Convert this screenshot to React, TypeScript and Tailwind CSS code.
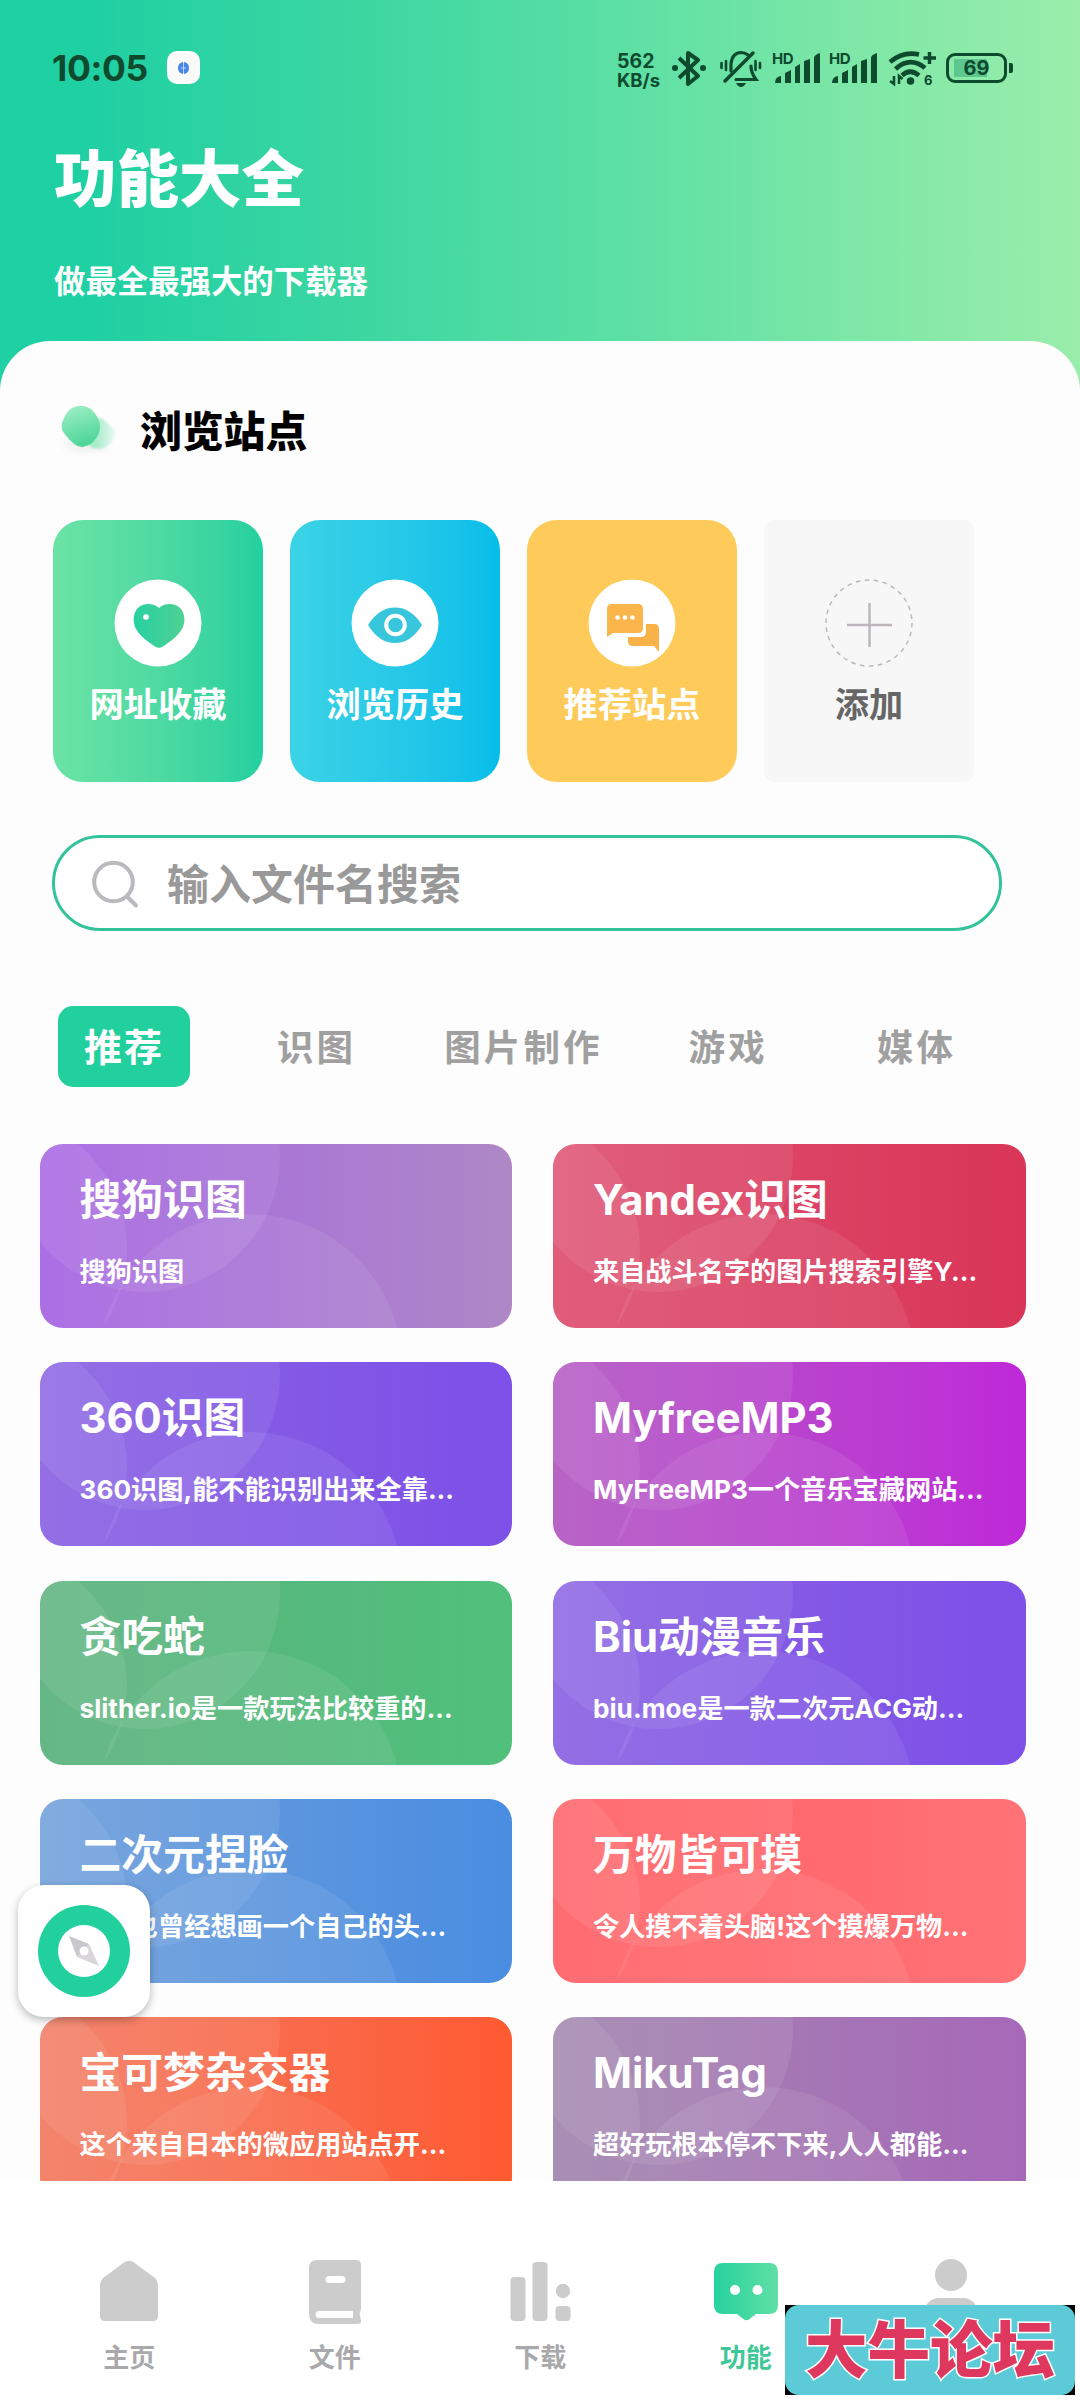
import type { ReactNode } from "react";
import { clsx } from "clsx";

interface Tool {
  title: string;
  desc: string;
  gradient: string;
}

const TOOLS: Tool[] = [
  { title: "搜狗识图", desc: "搜狗识图", gradient: "from-[#a562e3] to-[#ae88c6]" },
  { title: "Yandex识图", desc: "来自战斗名字的图片搜索引擎Y...", gradient: "from-[#de4f70] to-[#d93558]" },
  { title: "360识图", desc: "360识图,能不能识别出来全靠...", gradient: "from-[#8a62e2] to-[#7d50e8]" },
  { title: "MyfreeMP3", desc: "MyFreeMP3一个音乐宝藏网站...", gradient: "from-[#b256c2] to-[#bf28d8]" },
  { title: "贪吃蛇", desc: "slither.io是一款玩法比较重的...", gradient: "from-[#5ab17c] to-[#50c17c]" },
  { title: "Biu动漫音乐", desc: "biu.moe是一款二次元ACG动...", gradient: "from-[#8a62e2] to-[#7d50e8]" },
  { title: "二次元捏脸", desc: "你是也曾经想画一个自己的头...", gradient: "from-[#6d9edb] to-[#4a8de1]" },
  { title: "万物皆可摸", desc: "令人摸不着头脑!这个摸爆万物...", gradient: "from-[#ff6065] to-[#ff7276]" },
  { title: "宝可梦杂交器", desc: "这个来自日本的微应用站点开...", gradient: "from-[#f37a60] to-[#ff5a32]" },
  { title: "MikuTag", desc: "超好玩根本停不下来,人人都能...", gradient: "from-[#a186ae] to-[#a768b9]" },
];

const TABS = ["推荐", "识图", "图片制作", "游戏", "媒体"];

export default function App() {
  return (
    <div className="relative flex h-[2400px] w-[1080px] flex-col overflow-hidden bg-[linear-gradient(to_right,#1fd0a3_8%,#36d5a1_28%,#57dea4_54%,#82e8a7_82%,#9aedab_100%)] font-[Inter,'Noto_Sans_CJK_SC',sans-serif]">
      <header className="flex h-[341px] flex-col text-white">
        <StatusBar />
        <h1 className="mt-px pl-[54px] text-[62.5px] leading-[84px] font-black">功能大全</h1>
        <p className="mt-[41px] pl-[54px] text-[31.4px] leading-[40px] font-bold">做最全最强大的下载器</p>
      </header>

      <main className="h-[1840px] shrink-0 overflow-hidden rounded-t-[50px] bg-[#fdfdfd]">
        <div className="flex items-center pt-[58px] pl-[52px]">
          <Blob />
          <h2 className="ml-[12px] text-[41.8px] leading-[66px] font-black text-black">浏览站点</h2>
        </div>

        <div className="mt-[55px] flex gap-[27px] pl-[53px]">
          <Shortcut label="网址收藏" className="rounded-[30px] bg-linear-to-r from-[#6be3a5] to-[#22d09f] text-white">
            <HeartIcon />
          </Shortcut>
          <Shortcut label="浏览历史" className="rounded-[30px] bg-linear-to-r from-[#3bd3e6] to-[#05bee9] text-white">
            <EyeIcon />
          </Shortcut>
          <Shortcut label="推荐站点" className="rounded-[30px] bg-[#fecb5a] text-white">
            <ChatIcon />
          </Shortcut>
          <Shortcut label="添加" className="rounded-[10px] bg-[#f7f7f7] text-[#666]">
            <AddIcon />
          </Shortcut>
        </div>

        <div className="mt-[53px] ml-[52px] flex h-[96px] w-[950px] items-center rounded-full border-3 border-[#33c39a] bg-white pl-[36px]">
          <svg width="52" height="52" viewBox="0 0 52 52" fill="none" stroke="#b9b9be" strokeWidth="4" strokeLinecap="round">
            <circle cx="22.500" cy="25" r="19.300" />
            <path d="M36 39.500L45 48.500" />
          </svg>
          <span className="mt-[3px] ml-[24px] text-[42px] leading-[60px] font-bold text-[#999]">输入文件名搜索</span>
        </div>

        <div className="mt-[75px] flex h-[81px] items-center text-[36.5px] leading-[54px] font-bold tracking-[3.1px] text-[#a0a0a0]">
          {TABS.map((tab, i) => (
            <div
              key={tab}
              className={clsx(
                "flex items-center justify-center",
                i === 0 && "ml-[58px] h-[81px] w-[132px] rounded-[15px] bg-[#22d09e] text-[38px] tracking-[2px] text-white",
                i === 1 && "mt-[3px] ml-[87px]",
                i === 2 && "mt-[3px] ml-[88px]",
                i === 3 && "mt-[3px] ml-[86px]",
                i === 4 && "mt-[3px] ml-[109px]",
              )}
            >
              {tab}
            </div>
          ))}
        </div>

        <div className="mt-[57px] grid grid-cols-[472.5px_472.5px] gap-x-[41px] gap-y-[34.3px] pl-[39.5px]">
          {TOOLS.map((tool) => (
            <ToolCard key={tool.title} {...tool} />
          ))}
        </div>
      </main>

      <nav className="flex h-[219px] shrink-0 bg-white pl-[26.500px]">
        <NavItem label="主页">
          <path d="M27 2.500Q32 -1 37 2.500L58 18Q61 21 61 25V56Q61 61 56 61H8Q3 61 3 56V25Q3 21 6 18Z" fill="#cccccc" />
        </NavItem>
        <NavItem label="文件">
          <path
            fillRule="evenodd"
            fill="#cccccc"
            d="M14 0H53Q58 0 58 5V49L56.500 54L58 60Q59 64 54 64H16Q6 64 6 54V8Q6 0 14 0ZM26 16a3.500 3.500 0 0 0 0 7H39a3.500 3.500 0 0 0 0-7ZM16 51a3.500 3.500 0 0 0 0 7H50V51Z"
          />
        </NavItem>
        <NavItem label="下载">
          <g fill="#cccccc">
            <rect x="2.500" y="17" width="15" height="44" rx="4" />
            <rect x="24.500" y="2" width="15" height="59" rx="4" />
            <circle cx="55" cy="31" r="7.200" />
            <rect x="47.500" y="46" width="15" height="15" rx="4" />
          </g>
        </NavItem>
        <NavItem label="功能" active>
          <defs>
            <linearGradient id="bubble">
              <stop offset="0" stopColor="#27d19e" />
              <stop offset="1" stopColor="#5fe0a5" />
            </linearGradient>
          </defs>
          <path
            d="M9 3H55Q64 3 64 12V45Q64 54 55 54H42L35 59.500Q32.500 61 30 59.500L23 54H9Q0 54 0 45V12Q0 3 9 3Z"
            fill="url(#bubble)"
          />
          <circle cx="21" cy="30" r="5" fill="#fff" />
          <circle cx="43.500" cy="30" r="5" fill="#fff" />
        </NavItem>
        <NavItem>
          <circle cx="32" cy="15" r="16" fill="#cccccc" />
          <path d="M18 38H46Q58 40 60 56Q61 61 56 61H8Q3 61 4 56Q6 40 18 38Z" fill="#cccccc" />
        </NavItem>
      </nav>

      {/* floating browser button */}
      <div className="absolute top-[1885px] left-[18px] flex h-[132px] w-[132px] items-center justify-center rounded-[26px] bg-white shadow-[0_3px_8px_rgba(0,0,0,0.28)]">
        <div className="flex h-[92px] w-[92px] items-center justify-center rounded-full bg-[#22d09e]">
          <svg width="52" height="52" viewBox="0 0 52 52">
            <circle cx="26" cy="26" r="26" fill="#fff" />
            <path d="M11 11L31 19L26 26L19 32Z" fill="#c9c6cd" />
            <path d="M19 32L26 26L31 19L41 41Z" fill="#d8d6da" />
            <circle cx="26" cy="26" r="4.500" fill="#fff" />
          </svg>
        </div>
      </div>

      {/* forum badge */}
      <div className="absolute top-[2305px] left-[785px] bg-black">
        <div className="flex h-[90px] w-[290px] items-center justify-center rounded-[14px] bg-[#5ccbd7] text-[62.5px] leading-[90px] font-black text-[#de385e] [-webkit-text-stroke:3px_white] [paint-order:stroke_fill]">
          大牛论坛
        </div>
      </div>
    </div>
  );
}

function ToolCard({ title, desc, gradient }: Tool) {
  return (
    <div className={clsx("relative h-[184px] overflow-hidden rounded-[23px] bg-linear-to-r", gradient)}>
      <svg className="absolute inset-0" width="473" height="184" fill="#fff" fillOpacity="0.08">
        <circle cx="-50" cy="105" r="137" />
        <circle cx="105" cy="13" r="135" />
        <circle cx="210" cy="222" r="152" />
      </svg>
      <div className="relative flex flex-col pt-[26px] pl-[40px] whitespace-nowrap text-white">
        <div className="text-[41.8px] leading-[60px] font-bold">{title}</div>
        <div className="mt-[23px] text-[26.2px] leading-[38px] font-bold">{desc}</div>
      </div>
    </div>
  );
}

function Shortcut({ label, className, children }: { label: string; className: string; children: ReactNode }) {
  return (
    <div className={clsx("flex h-[262px] w-[210px] flex-col items-center pt-[59px]", className)}>
      <svg width="88" height="88" viewBox="0 0 88 88">
        {children}
      </svg>
      <div className="mt-[13px] text-[34.2px] leading-[50px] font-bold">{label}</div>
    </div>
  );
}

function HeartIcon() {
  return (
    <>
      <defs>
        <linearGradient id="heart">
          <stop offset="0" stopColor="#27d1a2" />
          <stop offset="1" stopColor="#4fd093" />
        </linearGradient>
      </defs>
      <circle cx="44" cy="44" r="43.500" fill="#fff" />
      <path
        d="M45 29C50 24 60 24 65 28C71 33 72 43 68 50C64 57 56 63 49 67.500Q45 70 41 67.500C34 63 26 57 22 50C18 43 19 33 25 28C30 24 40 24 45 29Z"
        fill="url(#heart)"
      />
      <circle cx="32" cy="38" r="2.800" fill="#fff" />
    </>
  );
}

function EyeIcon() {
  return (
    <>
      <circle cx="44" cy="44" r="43.500" fill="#fff" />
      <path d="M17 46Q28 28.500 44 28.500Q60 28.500 71 46Q60 64 44 64Q28 64 17 46Z" fill="#38c6dc" />
      <circle cx="44.500" cy="46" r="9.300" fill="none" stroke="#fff" strokeWidth="4" />
    </>
  );
}

function ChatIcon() {
  return (
    <>
      <circle cx="44" cy="44" r="43.500" fill="#fff" />
      <path d="M58 45H66Q71 45 71 50V73L66 67H45Q40 67 40 62V58H53Q58 58 58 53Z" fill="#f9b248" />
      <path d="M24 25H50Q55 25 55 30V49Q55 54 50 54H25L19 58V30Q19 25 24 25Z" fill="#fab64b" />
      <circle cx="29.500" cy="38.500" r="2.300" fill="#fff" />
      <circle cx="37" cy="38.500" r="2.300" fill="#fff" />
      <circle cx="44.500" cy="38.500" r="2.300" fill="#fff" />
    </>
  );
}

function AddIcon() {
  return (
    <g fill="none" stroke="#bdb7bd" strokeWidth="1.500">
      <circle cx="44" cy="44" r="43" strokeDasharray="4.500 4.500" />
      <path d="M22 46H67M44.500 24V68" strokeWidth="2.500" />
    </g>
  );
}

function Blob() {
  return (
    <svg className="-mt-[6px]" width="76" height="56" viewBox="0 0 76 56">
      <defs>
        <linearGradient id="blob" x1="0" y1="0" x2="0.300" y2="1">
          <stop offset="0" stopColor="#a3f0c6" />
          <stop offset="1" stopColor="#4fd69a" />
        </linearGradient>
        <linearGradient id="blobTail" x1="0" y1="0" x2="1" y2="0">
          <stop offset="0.300" stopColor="#a5ecc8" />
          <stop offset="1" stopColor="#eafaf2" />
        </linearGradient>
        <filter id="blobShadow" x="-50%" y="-50%" width="200%" height="200%">
          <feGaussianBlur stdDeviation="4" />
        </filter>
        <filter id="blobSoft" x="-20%" y="-20%" width="140%" height="140%">
          <feGaussianBlur stdDeviation="1" />
        </filter>
      </defs>
      <ellipse cx="34" cy="44" rx="22" ry="6" fill="#ededed" filter="url(#blobShadow)" />
      <path d="M38 18L50 17L64 30Q61 45 48 48Q40 48 34 42Z" fill="url(#blobTail)" filter="url(#blobSoft)" />
      <path d="M20 7Q30 2 39 8Q51 20 47 32Q42 44 31 46Q23 47 12 32Q7 26 12 17Q15 10 20 7Z" fill="url(#blob)" />
    </svg>
  );
}

function NavItem({ label, active, children }: { label?: string; active?: boolean; children: ReactNode }) {
  return (
    <div className="flex w-[205.5px] flex-col items-center pt-[79px]">
      <svg width="64" height="65" viewBox="0 0 64 65" className="overflow-visible">
        {children}
      </svg>
      {label && (
        <div className={clsx("mt-[14px] text-[26px] leading-[38px] font-bold", active ? "text-[#3fc798]" : "text-[#a9a9ac]")}>
          {label}
        </div>
      )}
    </div>
  );
}

function SignalIcon() {
  return (
    <div className="relative h-[34px] w-[49px]">
      <div className="absolute -top-[2px] left-0 text-[15px] leading-[20px] font-bold tracking-[-0.5px]">HD</div>
      <svg width="49" height="34" viewBox="0 0 49 34" fill="#0d4a2e">
        <path d="M3 32Q3 26 9 25V32Z" />
        <path d="M13 22L19 19V32H13ZM23 16L28 13V32H23ZM32 10L38 8V32H32ZM42 7Q42 4 48 2V32H42Z" />
      </svg>
    </div>
  );
}

function StatusBar() {
  return (
    <div className="flex h-[136px] shrink-0 items-start pl-[52px] text-[#0d4a2e]">
      <div className="mt-[47px] w-[97px] text-[35.5px] leading-[44px] font-bold tracking-[-0.4px] whitespace-nowrap">10:05</div>
      <div className="mt-[51px] ml-[18px] flex h-[33px] w-[33px] items-center justify-center rounded-[10px] bg-[#fafafa]">
        <svg width="11" height="12" viewBox="0 0 11 12">
          <path d="M5 0V12Q0 11 0 6Q0 1 5 0ZM6 0Q11 1 11 6Q11 11 6 12Z" fill="#4a86e8" />
          <path d="M5.500 1V11M3 6H8" stroke="#b9d2fa" strokeWidth="1" />
        </svg>
      </div>

      <div className="mt-[52px] ml-[417px] w-[46px] text-[19.5px] leading-[19px] font-bold">
        562
        <br />
        <span className="text-[18.5px]">KB/s</span>
      </div>
      <svg className="mt-[49px] ml-[8px]" width="36" height="38" viewBox="0 0 36 38" fill="none" stroke="#0d4a2e" strokeWidth="4">
        <path d="M8 9L27 27L17 35V4L27 11L8 29" strokeLinejoin="round" />
        <circle cx="4" cy="19" r="3" fill="#0d4a2e" stroke="none" />
        <circle cx="32" cy="19" r="3" fill="#0d4a2e" stroke="none" />
      </svg>
      <svg className="mt-[50px] ml-[12px]" width="44" height="38" viewBox="0 0 44 38" fill="none" stroke="#0d4a2e" strokeWidth="3.200" strokeLinecap="round">
        <path d="M12 21V14Q13 3 22 2.500Q26 2.500 29 5M32 16Q32 23 37 29.500H17" />
        <path d="M6 31L34 3" strokeWidth="3.500" />
        <path d="M2.500 13V18M7 11V20M36.500 11V20M41 13V18" strokeWidth="2.600" />
        <path d="M17 33H27Q25 37 22 37Q19 37 17 33Z" fill="#0d4a2e" stroke="none" />
      </svg>
      <div className="mt-[51px] ml-[9px] flex gap-[8px]">
        <SignalIcon />
        <SignalIcon />
      </div>
      <svg className="mt-[50px] ml-[10px]" width="50" height="38" viewBox="0 0 50 38" fill="none" stroke="#0d4a2e" strokeWidth="4.600">
        <path d="M2 12Q15 1 31 4.500" />
        <path d="M7.500 19Q22 6 37 18" />
        <path d="M14 25.500Q22 18 31 25.500" />
        <circle cx="22.500" cy="31" r="3.800" fill="#0d4a2e" stroke="none" />
        <path d="M41.500 2V14M35.500 8H48" strokeWidth="3.500" />
        <path d="M6 26V34L2 31M11 34V26L14.500 29" strokeWidth="2.500" />
        <text x="36" y="35" fontSize="13" fontWeight="700" fill="#0d4a2e" stroke="none">6</text>
      </svg>
      <div className="mt-[53px] ml-[8px] flex items-center">
        <div className="flex h-[30px] w-[61px] items-center justify-center rounded-[9px] border-3 border-[#0d4a2e] bg-[linear-gradient(#5cc78f,#5cc78f)] bg-[length:33px_18px] bg-[position:5px_center] bg-no-repeat text-[20px] leading-[24px] font-bold">
          69
        </div>
        <div className="ml-[2px] h-[10px] w-[4px] rounded-r-[2px] bg-[#0d4a2e]" />
      </div>
    </div>
  );
}
